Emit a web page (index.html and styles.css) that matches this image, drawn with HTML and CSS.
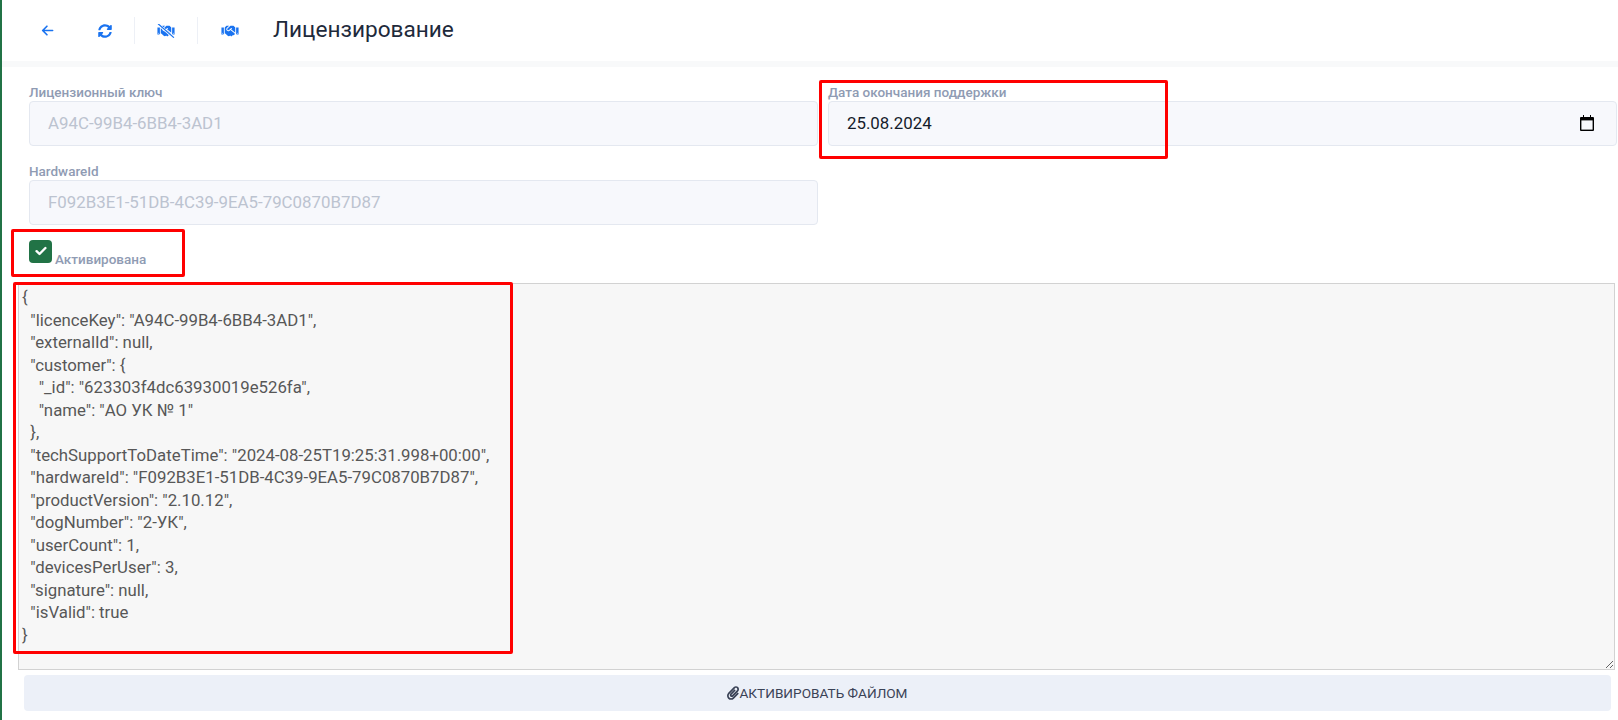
FILE: index.html
```html
<!DOCTYPE html>
<html lang="ru">
<head>
<meta charset="utf-8">
<title>Лицензирование</title>
<link rel="stylesheet" href="styles.css">
</head>
<body>
<svg class="defs" width="0" height="0" aria-hidden="true">
  <defs>
    <symbol id="handshake" viewBox="0 0 640 512"><path fill="currentColor" d="M434.7 64h-85.9c-8 0-15.7 3-21.6 8.4l-98.3 90c-.1.1-.2.3-.3.4-16.6 15.6-16.3 40.5-2.1 56 12.7 13.9 39.4 17.6 56.1 2.7.1-.1.3-.1.4-.2l79.9-73.2c6.5-5.9 16.7-5.5 22.6 1 6 6.5 5.5 16.6-1 22.6l-26.1 23.9L504 313.8c2.9 2.4 5.5 5 7.9 7.7V128l-54.6-54.6c-5.9-6-14.1-9.4-22.6-9.4zM544 128.2v223.9c0 17.7 14.3 32 32 32h64V128.2h-96zm48 223.9c-8.8 0-16-7.2-16-16s7.2-16 16-16 16 7.2 16 16-7.2 16-16 16zM0 384h64c17.7 0 32-14.3 32-32V128.2H0V384zm48-63.9c8.8 0 16 7.2 16 16s-7.2 16-16 16-16-7.2-16-16c0-8.9 7.2-16 16-16zm435.9 18.6L334.6 217.5l-30 27.5c-29.7 27.1-75.2 24.5-101.7-4.4-26.9-29.4-24.8-74.9 4.4-101.7L289.1 64h-83.8c-8.5 0-16.6 3.4-22.6 9.4L128 128v223.9h18.3l90.5 81.9c27.4 22.3 67.7 18.1 90-9.3l.2-.2 17.9 15.5c15.9 13 39.4 10.5 52.3-5.4l31.4-38.6 5.4 4.4c13.7 11.1 33.9 9.1 45-4.7l9.5-11.7c11.2-13.8 9.1-33.9-4.6-45.1z"/></symbol>
  </defs>
</svg>
<div class="page">
  <header class="toolbar">
    <button class="tool tool-back" type="button" aria-label="Назад">
      <svg class="ico-arrow" viewBox="0 0 14 14"><path d="M12.5 7H2M6.4 2.4 1.8 7l4.6 4.6" fill="none" stroke="currentColor" stroke-width="1.8" stroke-linecap="round" stroke-linejoin="round"/></svg>
    </button>
    <button class="tool tool-sync" type="button" aria-label="Обновить">
      <svg class="ico-sync" viewBox="0 0 512 512"><path fill="currentColor" d="M370.72 133.28C339.458 104.008 298.888 87.962 255.848 88c-77.458.068-144.328 53.178-162.791 126.85-1.344 5.363-6.122 9.15-11.651 9.15H24.103c-7.498 0-13.194-6.807-11.807-14.176C33.933 94.924 134.813 8 256 8c66.448 0 126.791 26.136 171.315 68.685L463.03 40.97C478.149 25.851 504 36.559 504 57.941V192c0 13.255-10.745 24-24 24H345.941c-21.382 0-32.09-25.851-16.971-40.971l41.75-41.749zM32 296h134.059c21.382 0 32.09 25.851 16.971 40.971l-41.75 41.75c31.262 29.273 71.835 45.319 114.876 45.28 77.418-.07 144.315-53.144 162.787-126.849 1.344-5.363 6.122-9.15 11.651-9.15h57.304c7.498 0 13.194 6.807 11.807 14.176C478.067 417.076 377.187 504 256 504c-66.448 0-126.791-26.136-171.315-68.685L48.97 471.03C33.851 486.149 8 475.441 8 454.059V320c0-13.255 10.745-24 24-24z"/></svg>
    </button>
    <span class="sep"></span>
    <button class="tool tool-slash" type="button" aria-label="Деактивировать">
      <svg class="ico-hand" viewBox="0 0 640 512"><use href="#handshake"/><path d="M40 10 600 500" stroke="#fff" stroke-width="90" fill="none"/><path d="M30 -10 610 500" stroke="currentColor" stroke-width="44" fill="none"/></svg>
    </button>
    <span class="sep"></span>
    <button class="tool tool-hand" type="button" aria-label="Активировать">
      <svg class="ico-hand" viewBox="0 0 640 512"><use href="#handshake"/></svg>
    </button>
    <h1 class="title">Лицензирование</h1>
  </header>
  <div class="band"></div>
  <main class="content">
    <div class="fields">
      <div class="field">
        <div class="field-label">Лицензионный ключ</div>
        <div class="field-box is-disabled">A94C-99B4-6BB4-3AD1</div>
      </div>
      <div class="field">
        <div class="field-label">Дата окончания поддержки</div>
        <div class="field-box is-date">
          <span>25.08.2024</span>
          <svg class="ico-cal" viewBox="0 0 14 16"><path fill="#000" d="M3 0h1v2h6V0h1v2h2a1 1 0 0 1 1 1v12a1 1 0 0 1-1 1H1a1 1 0 0 1-1-1V3a1 1 0 0 1 1-1h2z"/><rect x="1.4" y="5.4" width="11.2" height="9.2" fill="#f7f8fc"/></svg>
        </div>
      </div>
      <div class="field">
        <div class="field-label">HardwareId</div>
        <div class="field-box is-disabled">F092B3E1-51DB-4C39-9EA5-79C0870B7D87</div>
      </div>
    </div>
    <div class="activated">
      <span class="check"><svg viewBox="0 0 12 10"><path d="M1.6 5.2 4.5 8l5.9-6" fill="none" stroke="#fff" stroke-width="2.4" stroke-linecap="round" stroke-linejoin="round"/></svg></span>
      <span class="check-label">Активирована</span>
    </div>
    <textarea class="json" readonly spellcheck="false">{
  "licenceKey": "A94C-99B4-6BB4-3AD1",
  "externalId": null,
  "customer": {
    "_id": "623303f4dc63930019e526fa",
    "name": "АО УК № 1"
  },
  "techSupportToDateTime": "2024-08-25T19:25:31.998+00:00",
  "hardwareId": "F092B3E1-51DB-4C39-9EA5-79C0870B7D87",
  "productVersion": "2.10.12",
  "dogNumber": "2-УК",
  "userCount": 1,
  "devicesPerUser": 3,
  "signature": null,
  "isValid": true
}</textarea>
    <button class="activate" type="button">
      <svg class="ico-clip" viewBox="0 0 448 512"><path fill="currentColor" d="M43.246 466.142c-58.43-60.289-57.341-157.511 1.386-217.581L254.392 34c44.316-45.332 116.351-45.336 160.671 0 43.89 44.894 43.943 117.329 0 162.276L232.214 383.128c-29.855 30.537-78.633 30.111-107.982-.998-28.275-29.97-27.368-77.473 1.452-106.953l143.743-146.835c6.182-6.314 16.312-6.422 22.626-.241l22.861 22.379c6.315 6.182 6.422 16.312.241 22.626L171.427 319.927c-4.932 5.045-5.236 13.428-.648 18.292 4.372 4.634 11.245 4.711 15.688.165l182.849-186.851c19.613-20.062 19.613-52.725-.011-72.798-19.189-19.627-49.957-19.637-69.154 0L90.39 293.295c-34.763 35.56-35.299 93.12-1.191 128.313 34.01 35.093 88.985 35.137 123.058.286l172.06-175.999c6.177-6.319 16.307-6.433 22.626-.256l22.877 22.364c6.319 6.177 6.434 16.307.256 22.626l-172.06 175.998c-59.576 60.938-155.943 60.216-214.77-.485z"/></svg>АКТИВИРОВАТЬ ФАЙЛОМ
    </button>
  </main>
</div>
<div class="mark mark-date"></div>
<div class="mark mark-check"></div>
<div class="mark mark-json"></div>
</body>
</html>
```
FILE: styles.css
```css
* { box-sizing: border-box; }
html, body { margin: 0; padding: 0; height: 100%; overflow: hidden; background: #fff; }
body { position: relative; font-family: Roboto, "Noto Sans", sans-serif; color: #1e2a3b; }
.defs { position: absolute; }
.page { min-height: 720px; border-left: 2px solid #217346; }

.toolbar { height: 61px; display: flex; align-items: center; padding-left: 36px; }
.tool { border: 0; background: none; padding: 0; color: #1a73f0; display: flex; align-items: center; justify-content: center; }
.tool-back { width: 18px; height: 20px; }
.tool-sync { width: 18px; height: 20px; margin-left: 40px; }
.sep { width: 1px; height: 27px; background: #edf0f6; }
.tool-sync + .sep { margin-left: 20px; }
.tool-slash { width: 18px; height: 20px; margin-left: 22px; }
.tool-slash + .sep { margin-left: 22px; }
.tool-hand { width: 18px; height: 20px; margin-left: 23px; }
.ico-arrow { width: 13px; height: 13px; }
.ico-sync { width: 14px; height: 14px; }
.ico-hand { width: 18px; height: 14px; }
.title { margin: 0 0 2px 34px; font-size: 22.6px; font-weight: 400; line-height: 30px; color: #1e2a3b; }

.band { height: 6px; background: #f8f9fa; }

.content { padding: 20px 0 0 16px; }
.fields { display: grid; grid-template-columns: 789px 789px; column-gap: 10px; row-gap: 20px; padding-left: 11px; }
.field-label { font-size: 13.5px; font-weight: 500; line-height: 11px; height: 14px; color: #8f9bb3; white-space: nowrap; }
.field-box { height: 45px; border: 1px solid #e4e8f0; border-radius: 4px; background: #f7f8fc; padding: 0 18px 2px; display: flex; align-items: center; font-size: 16.85px; font-weight: 400; color: #bcc3d0; }
.field-box.is-date { color: #141c2b; justify-content: space-between; padding-right: 22px; padding-bottom: 2px; }
.ico-cal { width: 14px; height: 16px; display: block; }

.activated { display: flex; align-items: flex-end; height: 24px; margin: 14px 0 0 11px; }
.check { width: 23px; height: 23px; border-radius: 4px; background: #217346; display: flex; align-items: center; justify-content: center; }
.check svg { width: 12px; height: 10px; margin-top: -2px; }
.check-label { font-size: 13.5px; font-weight: 500; line-height: 15px; color: #8f9bb3; margin-left: 3px; position: relative; top: 4px; }

.json { display: block; width: 1597px; height: 387px; margin: 20px 0 0; padding: 2px 3px; border: 1px solid #d2d2d2; border-radius: 0; background: #f7f7f7; outline: 0; font-family: Roboto, sans-serif; font-size: 16.8px; line-height: 22.5px; color: #575757; white-space: pre; resize: both; overflow: hidden; }

.activate { display: flex; align-items: center; justify-content: center; width: 1587px; height: 36px; margin: 5px 0 0 6px; border: 0; border-radius: 4px; background: #ecf0f8; font-family: Roboto, sans-serif; font-size: 13.6px; color: #3a4256; padding: 0; }
.ico-clip { width: 12px; height: 14px; color: #3a4256; }

.mark { position: absolute; border: 3px solid #f00; border-radius: 2px; pointer-events: none; }
.mark-date { left: 819px; top: 80px; width: 349px; height: 79px; }
.mark-check { left: 11px; top: 229px; width: 174px; height: 48px; }
.mark-json { left: 13px; top: 282px; width: 500px; height: 372px; }
```
